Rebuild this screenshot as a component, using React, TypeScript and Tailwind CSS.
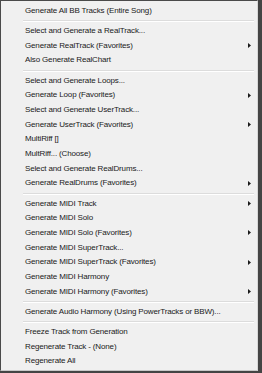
type Entry = { label: string; sub?: boolean } | 'sep'

const entries: Entry[] = [
  { label: 'Generate All BB Tracks (Entire Song)' },
  'sep',
  { label: 'Select and Generate a RealTrack...' },
  { label: 'Generate RealTrack (Favorites)', sub: true },
  { label: 'Also Generate RealChart' },
  'sep',
  { label: 'Select and Generate Loops...' },
  { label: 'Generate Loop (Favorites)', sub: true },
  { label: 'Select and Generate UserTrack...' },
  { label: 'Generate UserTrack (Favorites)', sub: true },
  { label: 'MultiRiff []' },
  { label: 'MultRiff...  (Choose)' },
  { label: 'Select and Generate RealDrums...' },
  { label: 'Generate RealDrums (Favorites)', sub: true },
  'sep',
  { label: 'Generate MIDI Track', sub: true },
  { label: 'Generate MIDI Solo' },
  { label: 'Generate MIDI Solo (Favorites)', sub: true },
  { label: 'Generate MIDI SuperTrack...' },
  { label: 'Generate MIDI SuperTrack (Favorites)', sub: true },
  { label: 'Generate MIDI Harmony' },
  { label: 'Generate MIDI Harmony (Favorites)', sub: true },
  'sep',
  { label: 'Generate Audio Harmony (Using PowerTracks or BBW)...' },
  'sep',
  { label: 'Freeze Track from Generation' },
  { label: 'Regenerate Track - (None)' },
  { label: 'Regenerate All' },
]

export default function App() {
  return (
    <div className="w-[262px] h-[373px] bg-[#444444]">
      <div
        className="w-[258px] h-[371px] bg-[#f0f0f0] border-l border-t border-[#4a4a4a] border-r border-r-[#d8d8d8] border-b border-b-[#c8c8c8] pt-[2.5px] text-[8px] tracking-[-0.15px] text-[#1a1a1a]"
        style={{ fontFamily: '"Liberation Sans", Arial, sans-serif' }}
      >
        {entries.map((e, i) =>
          e === 'sep' ? (
            <div key={i} className="h-[5.5px] flex flex-col justify-center pl-[22px] pr-[3px]">
              <div className="h-px bg-[#dcdcdc]" />
              <div className="h-px bg-white" />
            </div>
          ) : (
            <div key={i} className="h-[14.7px] flex items-center pl-[24px] pr-[5px] whitespace-nowrap">
              <span className="flex-1 leading-none">{e.label}</span>
              {e.sub && (
                <svg width="3" height="5" viewBox="0 0 3 5" className="mr-[1px]">
                  <path d="M0 0 L3 2.5 L0 5 Z" fill="#1a1a1a" />
                </svg>
              )}
            </div>
          )
        )}
      </div>
    </div>
  )
}
